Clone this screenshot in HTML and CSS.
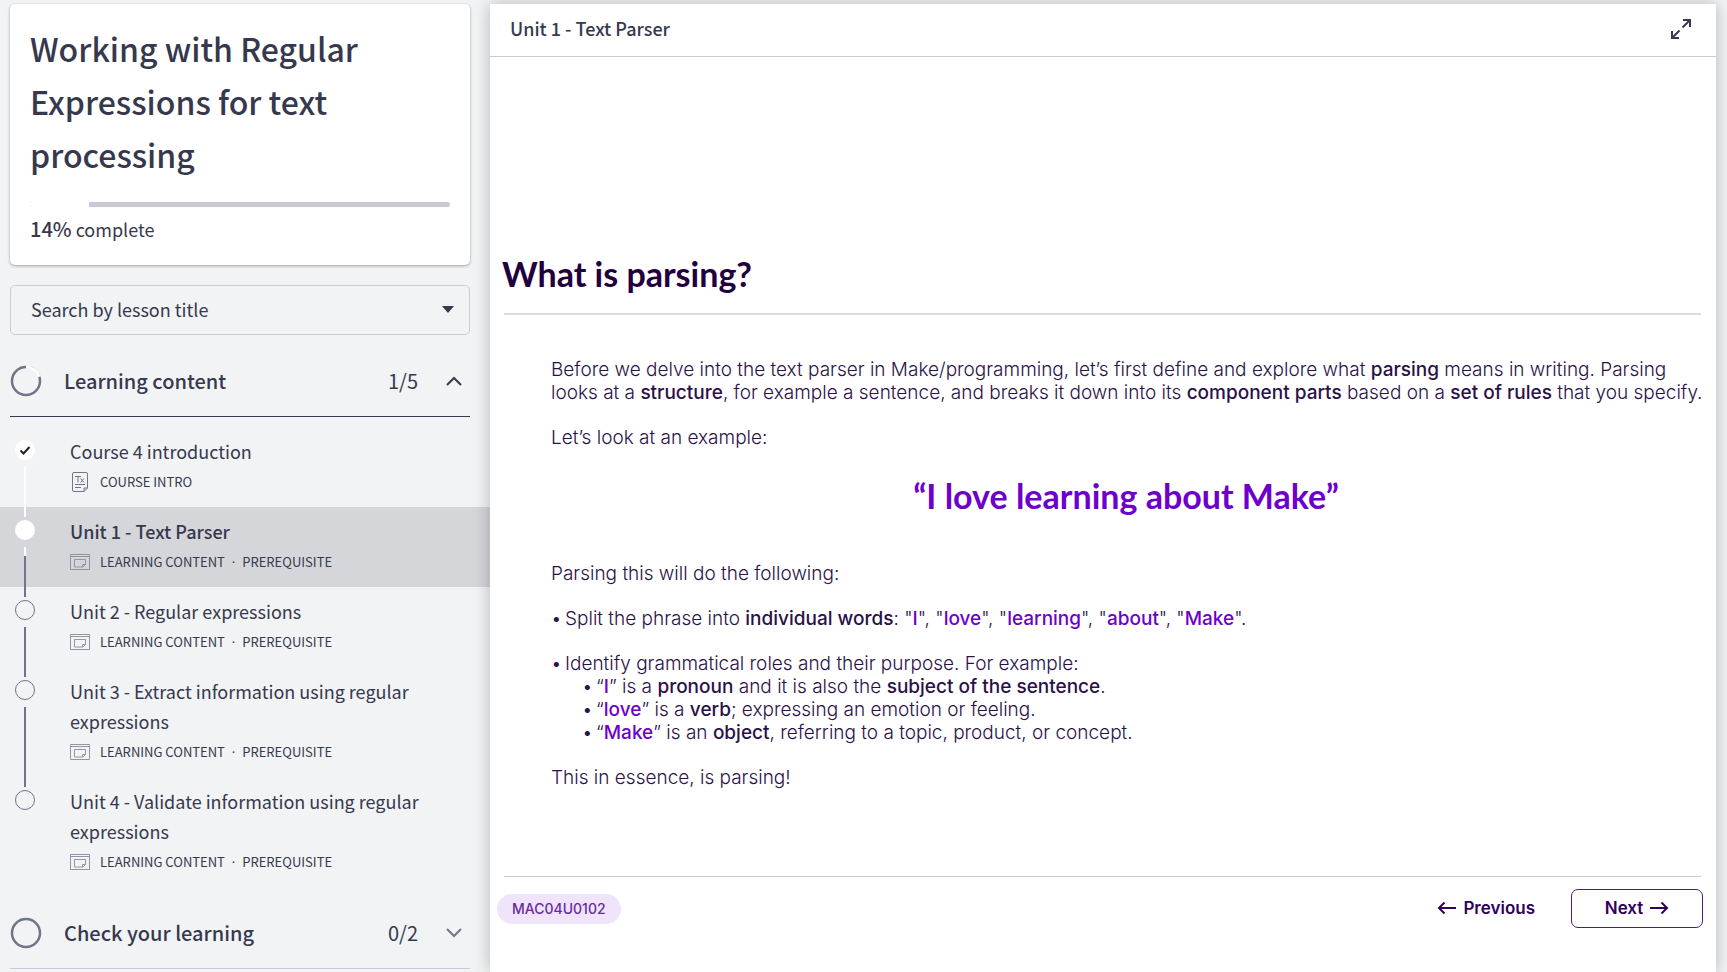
FILE: index.html
```html
<!DOCTYPE html>
<html lang="en">
<head>
<meta charset="utf-8">
<meta name="viewport" content="width=device-width, initial-scale=1">
<title>Unit 1 - Text Parser</title>
<link rel="stylesheet" href="styles.css">
</head>
<body>
<svg class="sprite" aria-hidden="true">
  <symbol id="lesson" viewBox="0 0 20 16">
    <path d="M.5.5h19v15H.5zM.5 2.5h19M4.500 5.500h11v5l-2.500 2.500h-8.500zM15.500 10.500h-3v2.500" fill="none" stroke="currentColor"/>
  </symbol>
</svg>
<div class="layout">
  <aside class="sidebar">
    <section class="course">
      <h1 class="course-title">Working with Regular Expressions for text processing</h1>
      <div class="progress" role="progressbar" aria-label="Course progress" aria-valuenow="14" aria-valuemin="0" aria-valuemax="100"><div class="progress-done" style="width:14%"></div></div>
      <p class="complete"><strong>14%</strong> complete</p>
    </section>

    <label class="search">
      <input class="search-input" type="text" placeholder="Search by lesson title" aria-label="Search by lesson title">
      <svg class="caret" viewBox="0 0 12 7" aria-hidden="true"><path d="M0 0h12L6 7z" fill="currentColor"/></svg>
    </label>

    <nav aria-label="Lessons">
      <button class="section open" type="button" aria-expanded="true">
        <svg class="ring" viewBox="0 0 32 32" aria-hidden="true"><circle cx="16" cy="16" r="14" class="ring-track"/><path d="M16 2A14 14 0 0 1 29.300 11.700" class="ring-done"/></svg>
        <span class="section-name">Learning content</span>
        <span class="count">1/5</span>
        <svg class="chevron" viewBox="0 0 16 10" aria-hidden="true"><path d="M1 9l7-7 7 7"/></svg>
      </button>
      <ul class="lessons">
        <li class="lesson">
          <div class="rail"><span class="dot done"><svg class="tick" viewBox="0 0 20 20" aria-hidden="true"><path d="M5.500 10.500l3 3 6-6.500"/></svg></span><span class="line past"></span></div>
          <a class="lesson-link" href="#intro">
            <span class="lesson-name">Course 4 introduction</span>
            <span class="meta"><svg class="meta-icon" viewBox="0 0 20 20" aria-hidden="true"><path d="M4 .5h12a1.500 1.500 0 0 1 1.500 1.500v14l-3.500 3.500h-10A1.500 1.500 0 0 1 2.500 18V2A1.500 1.500 0 0 1 4 .5zM17.500 16H14v3.500M5 12.500h10M5 15.500h6" fill="none" stroke="currentColor"/><path d="M5 4.500h6M8 4.500v6M10.500 6.500l3.500 4M14 6.500l-3.500 4" fill="none" stroke="currentColor"/></svg>COURSE INTRO</span>
          </a>
        </li>
        <li class="lesson current">
          <div class="rail"><span class="dot done"></span><span class="line half"></span></div>
          <a class="lesson-link" href="#unit1" aria-current="page">
            <span class="lesson-name">Unit 1 - Text Parser</span>
            <span class="meta"><svg class="meta-icon soft" aria-hidden="true"><use href="#lesson"/></svg><span>LEARNING CONTENT <span class="sep">·</span> PREREQUISITE</span></span>
          </a>
        </li>
        <li class="lesson">
          <div class="rail"><span class="dot"></span><span class="line"></span></div>
          <a class="lesson-link" href="#unit2">
            <span class="lesson-name">Unit 2 - Regular expressions</span>
            <span class="meta"><svg class="meta-icon soft" aria-hidden="true"><use href="#lesson"/></svg><span>LEARNING CONTENT <span class="sep">·</span> PREREQUISITE</span></span>
          </a>
        </li>
        <li class="lesson">
          <div class="rail"><span class="dot"></span><span class="line"></span></div>
          <a class="lesson-link" href="#unit3">
            <span class="lesson-name">Unit 3 - Extract information using regular expressions</span>
            <span class="meta"><svg class="meta-icon soft" aria-hidden="true"><use href="#lesson"/></svg><span>LEARNING CONTENT <span class="sep">·</span> PREREQUISITE</span></span>
          </a>
        </li>
        <li class="lesson">
          <div class="rail"><span class="dot"></span></div>
          <a class="lesson-link" href="#unit4">
            <span class="lesson-name">Unit 4 - Validate information using regular expressions</span>
            <span class="meta"><svg class="meta-icon soft" aria-hidden="true"><use href="#lesson"/></svg><span>LEARNING CONTENT <span class="sep">·</span> PREREQUISITE</span></span>
          </a>
        </li>
      </ul>
      <button class="section" type="button" aria-expanded="false">
        <svg class="ring" viewBox="0 0 32 32" aria-hidden="true"><circle cx="16" cy="16" r="14" class="ring-track"/></svg>
        <span class="section-name">Check your learning</span>
        <span class="count">0/2</span>
        <svg class="chevron" viewBox="0 0 16 10" aria-hidden="true"><path d="M1 1l7 7 7-7"/></svg>
      </button>
    </nav>
  </aside>

  <main class="panel">
    <header class="panel-head">
      <h2 class="panel-title">Unit 1 - Text Parser</h2>
      <button class="expand" type="button" aria-label="Full screen"><svg class="expand-icon" viewBox="0 0 22 22" aria-hidden="true"><path d="M12.500 10.500L19 4M13 3h7v7M9.500 13.500L3 20M2 14v7h7"/></svg></button>
    </header>
    <article class="slide">
      <h3 class="slide-title">What is parsing?</h3>
      <div class="slide-body">
        <p class="lead">Before we delve into the text parser in Make/programming, let’s first define and explore what <b>parsing</b> means in writing. Parsing looks at a <b>structure</b>, for example a sentence, and breaks it down into its <b>component parts</b> based on a <b>set of rules</b> that you specify.</p>
        <p>Let’s look at an example:</p>
        <blockquote class="quote">“I love learning about Make”</blockquote>
        <p>Parsing this will do the following:</p>
        <ul class="points">
          <li>Split the phrase into <b>individual words</b>: "<b class="word">I</b>", "<b class="word">love</b>", "<b class="word">learning</b>", "<b class="word">about</b>", "<b class="word">Make</b>".</li>
          <li>Identify grammatical roles and their purpose. For example:
            <ul class="subpoints">
              <li>“<b class="word">I</b>” is a <b>pronoun</b> and it is also the <b>subject of the sentence</b>.</li>
              <li>“<b class="word">love</b>” is a <b>verb</b>; expressing an emotion or feeling.</li>
              <li>“<b class="word">Make</b>” is an <b>object</b>, referring to a topic, product, or concept.</li>
            </ul>
          </li>
        </ul>
        <p>This in essence, is parsing!</p>
      </div>
    </article>
    <footer class="slide-foot">
      <span class="code">MAC04U0102</span>
      <div class="pager">
        <button class="page-button" type="button"><svg class="arrow" viewBox="0 0 20 14" aria-hidden="true"><path d="M19 7H2M7.500 1.500L2 7l5.500 5.500"/></svg>Previous</button>
        <button class="page-button next" type="button">Next<svg class="arrow" viewBox="0 0 20 14" aria-hidden="true"><path d="M1 7h17M12.500 1.500L18 7l-5.500 5.500"/></svg></button>
      </div>
    </footer>
  </main>
</div>
</body>
</html>
```
FILE: styles.css
```css
* { box-sizing: border-box; }
body {
  margin: 0;
  background: #f1f3f5;
  color: #36394d;
  font-family: "Noto Sans CJK SC", "Noto Sans", sans-serif;
  font-size: 18px;
  line-height: 30px;
}
h1, h2, h3, p, ul, blockquote { margin: 0; padding: 0; }
ul { list-style: none; }
button { border: 0; padding: 0; background: none; color: inherit; font: inherit; cursor: pointer; }
svg { flex: none; }
.sprite { display: none; }

.layout { display: grid; grid-template-columns: 490px 1fr; min-height: 100vh; padding: 4px 11px 0 0; }

/* Sidebar */
.course {
  margin: 0 20px 20px 10px;
  padding: 18px 20px 21px;
  background: #fff;
  border-radius: 5px;
  box-shadow: 0 1px 3px rgba(0, 0, 0, .35);
}
.course-title { font-size: 32px; line-height: 53px; font-weight: 500; }
.progress { height: 5px; margin: 21px 0 7px; background: #c8cad5; border-radius: 3px; overflow: hidden; }
.progress-done { height: 100%; background: #fff; }
.complete strong { font-size: 20px; font-weight: 500; line-height: 20px; }

.search {
  display: flex;
  align-items: center;
  margin: 0 20px 10px 10px;
  height: 50px;
  padding: 0 15px 2px 20px;
  border: 1px solid #c8cad5;
  border-radius: 5px;
}
.search-input { flex: 1; min-width: 0; padding: 0; border: 0; outline: 0; background: none; font: inherit; color: inherit; }
.search-input::placeholder { color: #36394d; opacity: 1; }
.caret { width: 12px; height: 7px; }

.section {
  display: flex;
  align-items: center;
  width: calc(100% - 30px);
  height: 72px;
  margin-left: 10px;
  border-bottom: 1px solid #c8cad5;
  text-align: left;
}
.section.open { border-color: #36394d; }
.ring { width: 32px; height: 32px; fill: none; stroke-width: 2; }
.ring-track { stroke: #717589; stroke-width: 2.500; }
.ring-done { stroke: #fff; stroke-width: 3; }
.section-name { flex: 1; margin-left: 22px; font-size: 20px; font-weight: 500; }
.count { font-size: 20px; }
.chevron { width: 16px; height: 10px; margin: 0 8px 0 28px; fill: none; stroke: #717589; stroke-width: 2; }
.section.open .chevron { stroke: #36394d; }

.lessons { margin: 10px 0; }
.lesson { display: flex; padding-left: 15px; }
.lesson.current { background: #d5d6da; }
.rail { display: flex; flex-direction: column; align-items: center; z-index: 1; width: 20px; padding-top: 13px; }
.dot { flex: none; width: 20px; height: 20px; border: 1px solid #717589; border-radius: 50%; }
.dot.done { border: 0; background: #fff; }
.tick { display: block; fill: none; stroke: #222; stroke-width: 2; }
.line { flex: 1; width: 2px; margin: 7px 0 -10px; background: #717589; }
.line.past { background: #fff; }
.line.half { background: linear-gradient(#fff 9px, #717589 9px); }
.lesson-link { flex: 1; padding: 9px 60px 10px 35px; color: inherit; text-decoration: none; }
.lesson-name { display: block; }
.current .lesson-name { font-weight: 500; }
.meta { display: flex; align-items: center; gap: 10px; padding-top: 1px; font-size: 13px; }
.sep { padding: 0 4px; font-family: "Noto Sans", sans-serif; }
.meta-icon { width: 20px; height: 20px; color: #717589; }
.meta-icon.soft { height: 16px; color: #9394a6; }

/* Lesson panel */
.panel { display: flex; flex-direction: column; background: #fff; box-shadow: 0 0 16px rgba(0, 0, 0, .25); }
.panel-head { display: flex; align-items: center; justify-content: space-between; height: 53px; padding: 0 24px 4px 20px; border-bottom: 1px solid #c8cad5; }
.panel-title { font-size: 18px; font-weight: 500; }
.expand { display: flex; }
.expand-icon { width: 22px; height: 22px; fill: none; stroke: #36394d; stroke-width: 2; }

.slide { padding: 193px 15px 0 14px; font-family: Inter, "Liberation Sans", sans-serif; color: #2b1148; }
.slide-title { padding-bottom: 15px; border-bottom: 2px solid #dfdadf; font-size: 34px; line-height: 48px; font-weight: 700; color: #22003d; font-family: Lato, sans-serif; text-indent: -2px; }
.slide-body { padding: 43px 0 65px 47px; font-size: 19px; line-height: 23px; font-weight: 300; }
.slide-body p, .points > li { margin-bottom: 22px; }
.slide-body .lead { margin-right: -12px; }
.slide-body b { font-weight: 500; }
.slide-body .word { color: #6d00cc; }
.quote { margin: 24px 0 43px; text-align: center; font: 700 34px/46px Lato, sans-serif; color: #6d00cc; }
.points > li, .subpoints > li { display: block; padding-left: 14px; }
.points > li::before, .subpoints > li::before { content: "•"; display: inline-block; width: 14px; margin-left: -14px; }
.subpoints { padding-left: 17px; }

.slide-foot {
  display: flex;
  align-items: center;
  justify-content: space-between;
  margin: 0 15px 0 14px;
  padding-top: 12px;
  border-top: 1px solid #cfc8cf;
  font-family: Inter, "Liberation Sans", sans-serif;
}
.code { margin-left: -7px; padding: 0 15px; border-radius: 15px; background: #efe4fa; color: #6b2a9c; font-size: 14px; font-weight: 500; }
.pager { display: flex; gap: 36px; margin-right: -2px; }
.page-button { display: flex; align-items: center; justify-content: center; gap: 6px; height: 39px; padding-bottom: 2px; color: #32005c; font-size: 17px; font-weight: 600; }
.next { width: 132px; border: 1px solid #4b1c74; border-radius: 7px; }
.arrow { width: 20px; height: 14px; fill: none; stroke: currentColor; stroke-width: 2; }
```
